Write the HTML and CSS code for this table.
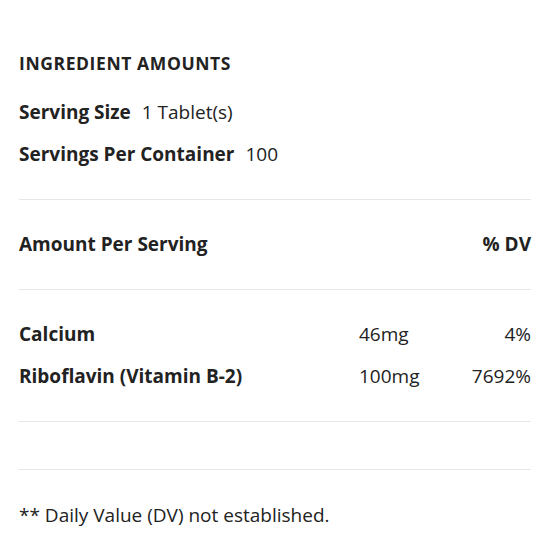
FILE: index.html
```html
<!DOCTYPE html>
<html>
<head>
<meta charset="utf-8">
<link rel="stylesheet" href="styles.css">
</head>
<body>
<div class="panel">
  <section class="sec sec-top">
    <h2 class="title">INGREDIENT AMOUNTS</h2>
    <div class="line"><b>Serving Size</b> 1 Tablet(s)</div>
    <div class="line"><b>Servings Per Container</b> 100</div>
  </section>
  <section class="sec">
    <div class="row head">
      <span class="name">Amount Per Serving</span>
      <span class="amt"></span>
      <span class="dv">% DV</span>
    </div>
  </section>
  <section class="sec">
    <div class="row">
      <span class="name">Calcium</span>
      <span class="amt">46mg</span>
      <span class="dv">4%</span>
    </div>
    <div class="row">
      <span class="name">Riboflavin (Vitamin B-2)</span>
      <span class="amt">100mg</span>
      <span class="dv">7692%</span>
    </div>
  </section>
  <section class="sec empty"></section>
  <p class="note">** Daily Value (DV) not established.</p>
</div>
</body>
</html>
```
FILE: styles.css
```css
html, body { margin: 0; padding: 0; background: #fff; }
body { font-family: "Open Sans", Inter, sans-serif; color: #222; }
.panel { padding: 51px 19px 0; }
.title { margin: 0 0 16px; font-size: 17.5px; line-height: 24px; font-weight: 700; letter-spacing: 0.6px; }
.line { font-size: 19px; line-height: 42px; }
.line b { font-weight: 700; margin-right: 6px; }
.sec { border-bottom: 1px solid #e6e6e6; padding: 23px 0 24px; }
.sec-top { padding-top: 0; }
.row { display: grid; grid-template-columns: 1fr 111px 61px; font-size: 19px; line-height: 42px; }
.row .name { font-weight: 700; }
.row .dv { text-align: right; }
.head .dv { font-weight: 700; }
.empty { padding: 24px 0 23px; }
.note { margin: 24px 0 0; font-size: 19px; line-height: 42px; }
```
